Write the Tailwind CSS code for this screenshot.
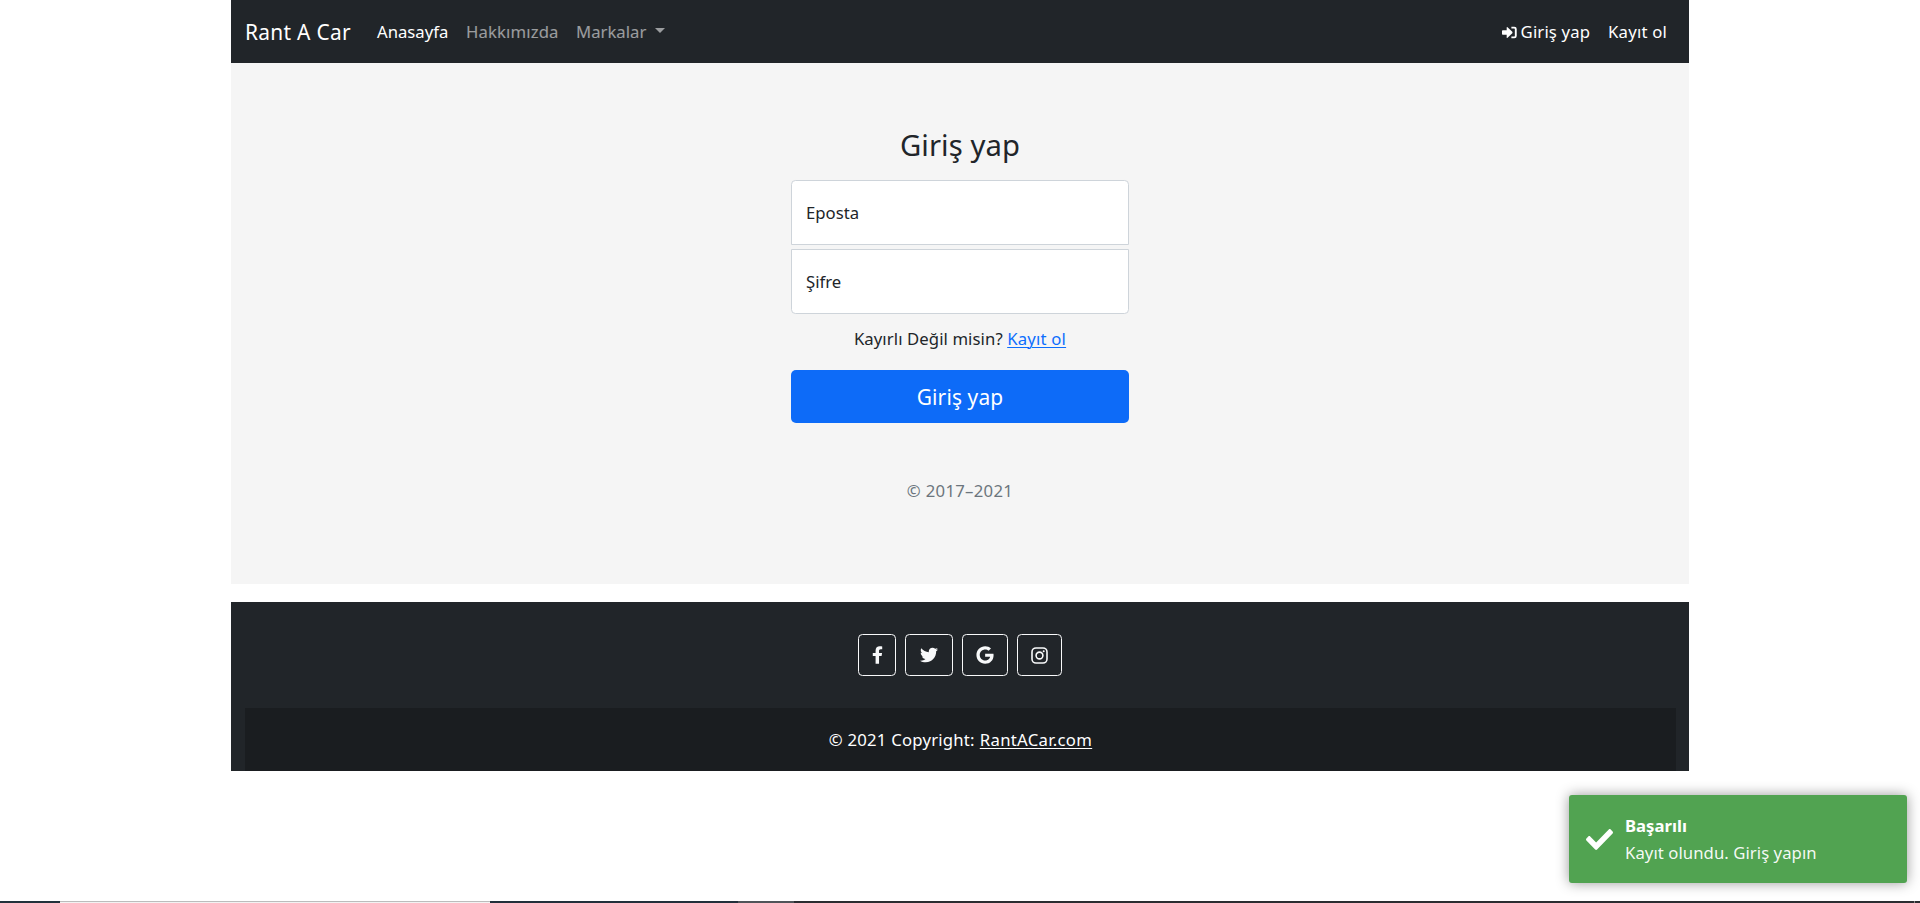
<!DOCTYPE html>
<html lang="tr">
<head>
<meta charset="utf-8">
<title>Rant A Car</title>
<script src="https://cdn.jsdelivr.net/npm/@tailwindcss/browser@4"></script>
</head>
<body class="relative flex h-[903px] flex-col overflow-hidden bg-white font-['Noto_Sans','Open_Sans',sans-serif] text-[16.72px] leading-[27px] text-[#212529]">
<div class="mx-auto w-[1458px]">
  <nav class="flex h-[63px] items-center bg-[#212529] pr-[22px] pl-[14px] whitespace-nowrap text-white">
    <a class="w-[132px] pt-px text-[20.9px] tracking-[0.3px]">Rant A Car</a>
    <a class="w-[89px]">Anasayfa</a>
    <a class="w-[110px] tracking-[0.12px] text-white/55">Hakkımızda</a>
    <a class="flex items-center text-white/55"><span class="w-[79px]">Markalar</span><span class="mb-[2px] h-0 w-0 border-x-[5.3px] border-t-[5.3px] border-x-transparent border-t-current"></span></a>
    <a class="ml-auto flex items-center">
      <svg class="mt-[2px] mr-[4px] h-[13px] w-[15px]" viewBox="0 0 16 13" fill="currentColor"><path d="M0 4.8Q0 4 .8 4H5V1.2Q5 .2 5.9.8L11 5.8Q11.5 6.5 11 7.2L5.9 12.2Q5 12.8 5 11.8V9H.8Q0 9 0 8.2Z"/><path d="M10 1.3h3.2q1.5 0 1.5 1.5v7.4q0 1.5-1.5 1.5H10" fill="none" stroke="currentColor" stroke-width="2"/></svg>
      <span class="tracking-[0.14px]">Giriş yap</span>
    </a>
    <a class="ml-[18px] tracking-[0.2px]">Kayıt ol</a>
  </nav>
  <main class="flex h-[521px] flex-col items-center bg-[#f5f5f5] pt-[63px]">
    <form class="flex w-[338px] flex-col text-center">
      <h1 class="mb-[15px] text-[29.26px] leading-[39px] tracking-[0.07px]">Giriş yap</h1>
      <label class="flex h-[65px] items-center rounded-t-[4.4px] border border-[#ced4da] bg-white pl-[14px]">Eposta</label>
      <label class="mt-1 flex h-[65px] items-center rounded-b-[4.4px] border border-[#ced4da] bg-white pl-[14px]">Şifre</label>
      <p class="mt-[11px] tracking-[0.09px]">Kayırlı Değil misin? <a class="tracking-[0.2px] text-[#0d6efd] underline decoration-1 underline-offset-2">Kayıt ol</a></p>
      <button type="button" class="mt-[18px] h-[53px] rounded-[5px] bg-[#0d6bf8] pt-px text-[20.9px] tracking-[0.13px] text-white">Giriş yap</button>
      <p class="mt-[54px] tracking-[0.3px] text-[#6c757d]">© 2017–2021</p>
    </form>
  </main>
  <footer class="mt-[18px] h-[169px] bg-[#212529] pr-[13px] pl-[14px] text-[#f8f9fa]">
    <div class="flex h-[106px] justify-center gap-[9px] pt-8 pr-px">
      <a class="flex h-[42px] w-[38px] items-center justify-center rounded-[4.4px] border border-[#f8f9fa]"><svg class="h-[18px] w-[11px]" viewBox="0 0 320 512" fill="currentColor"><path d="M279.14 288l14.22-92.66h-88.91v-60.13c0-25.35 12.42-50.06 52.24-50.06h40.42V6.26S260.43 0 225.36 0c-73.22 0-121.08 44.38-121.08 124.72v70.62H22.89V288h81.39v224h100.17V288z"/></svg></a>
      <a class="flex h-[42px] w-[48px] items-center justify-center rounded-[4.4px] border border-[#f8f9fa]"><svg class="h-[18px] w-[18px]" viewBox="0 0 512 512" fill="currentColor"><path d="M459.37 151.716c.325 4.548.325 9.097.325 13.645 0 138.72-105.583 298.558-298.558 298.558-59.452 0-114.68-17.219-161.137-47.106 8.447.974 16.568 1.299 25.34 1.299 49.055 0 94.213-16.568 130.274-44.832-46.132-.975-84.792-31.188-98.112-72.772 6.498.974 12.995 1.624 19.818 1.624 9.421 0 18.843-1.3 27.614-3.573-48.081-9.747-84.143-51.98-84.143-102.985v-1.299c13.969 7.797 30.214 12.67 47.431 13.319-28.264-18.843-46.781-51.005-46.781-87.391 0-19.492 5.197-37.36 14.294-52.954 51.655 63.675 129.3 105.258 216.365 109.807-1.624-7.797-2.599-15.918-2.599-24.04 0-57.828 46.782-104.934 104.934-104.934 30.213 0 57.502 12.67 76.67 33.137 23.715-4.548 46.456-13.32 66.599-25.34-7.798 24.366-24.366 44.833-46.132 57.827 21.117-2.273 41.584-8.122 60.426-16.243-14.292 20.791-32.161 39.308-52.628 54.253z"/></svg></a>
      <a class="flex h-[42px] w-[46px] items-center justify-center rounded-[4.4px] border border-[#f8f9fa]"><svg class="h-[18px] w-[18px]" viewBox="0 0 488 512" fill="currentColor"><path d="M488 261.8C488 403.3 391.1 504 248 504 110.8 504 0 393.2 0 256S110.8 8 248 8c66.8 0 123 24.5 166.3 64.9l-67.5 64.9C258.5 52.6 94.3 116.6 94.3 256c0 86.5 69.1 156.6 153.7 156.6 98.2 0 135-70.4 140.8-106.9H248v-85.3h236.1c2.3 12.7 3.9 24.9 3.9 41.4z"/></svg></a>
      <a class="flex h-[42px] w-[45px] items-center justify-center rounded-[4.4px] border border-[#f8f9fa]"><svg class="h-[17px] w-[17px]" viewBox="0 0 17 17" fill="none" stroke="currentColor"><rect x="1" y="1" width="15" height="15" rx="4" stroke-width="1.6"/><circle cx="8.5" cy="8.5" r="3.4" stroke-width="1.6"/><circle cx="12.7" cy="4.3" r="1" fill="currentColor" stroke="none"/></svg></a>
    </div>
    <div class="flex h-[63px] items-center justify-center bg-black/20 text-white"><span class="tracking-[0.22px]">© 2021 Copyright:</span><a class="ml-[5px] tracking-[0.3px] underline decoration-1 underline-offset-2">RantACar.com</a></div>
  </footer>
</div>
<aside class="absolute top-[795px] left-[1569px] flex h-[88px] w-[338px] items-center rounded-[3px] bg-[#51a351] pl-[17px] text-white shadow-[0_0_13px_#999999]">
  <svg class="h-[21px] w-[27px]" viewBox="0 65 512 382" preserveAspectRatio="none" fill="currentColor"><path d="M173.898 439.404l-166.4-166.4c-9.997-9.997-9.997-26.206 0-36.204l36.203-36.204c9.997-9.998 26.207-9.998 36.204 0L192 312.690 432.095 72.596c9.997-9.997 26.207-9.997 36.204 0l36.203 36.204c9.997 9.997 9.997 26.206 0 36.204l-294.400 294.401c-9.998 9.997-26.207 9.997-36.204-.001z"/></svg>
  <div class="ml-3"><div class="font-bold">Başarılı</div><div class="tracking-[0.06px] text-white/95">Kayıt olundu. Giriş yapın</div></div>
</aside>
<div class="mt-auto flex h-[2px] bg-[#2b2d31]">
  <div class="w-[60px] bg-[#22323c]"></div><div class="w-[430px] border-t border-[#bcbcbc] bg-[#f2f2f2]"></div><div class="w-[248px] bg-[#22303b]"></div><div class="w-[56px] bg-[#505459]"></div><div class="ml-auto w-px bg-[#888]"></div><div class="w-[5px]"></div>
</div>
</body>
</html>
